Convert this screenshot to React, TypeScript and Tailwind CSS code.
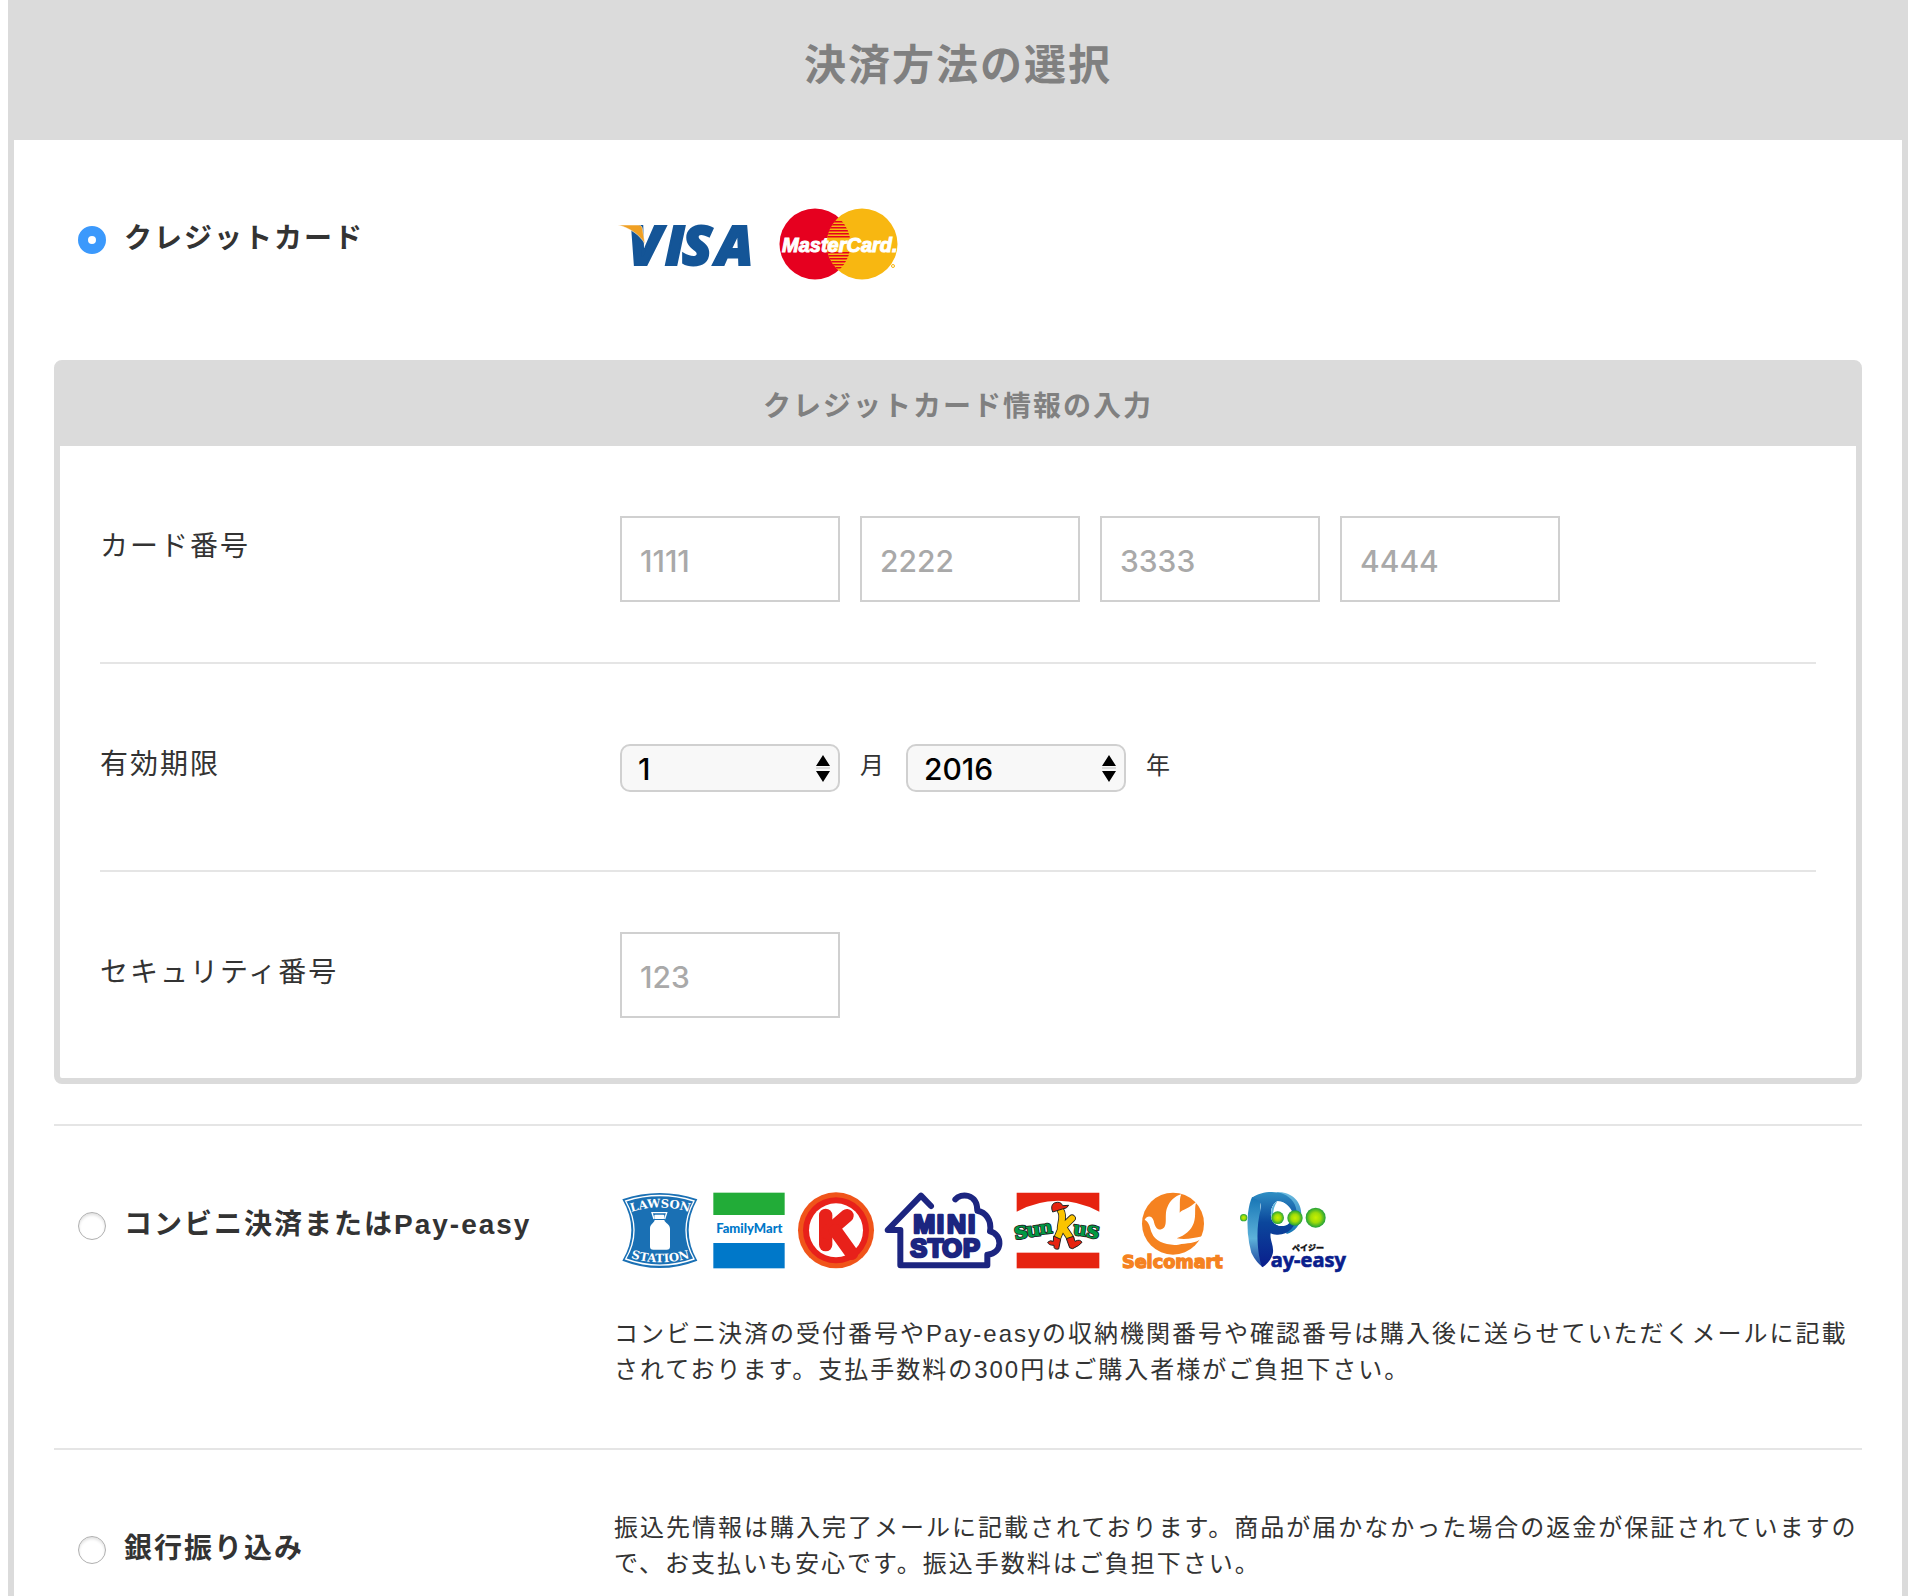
import { useState, type ReactNode } from "react";

const SANS = "font-['Liberation_Sans','Noto_Sans_CJK_JP',sans-serif]";

function VisaLogo() {
  return (
    <svg className="h-[80px] w-[136px] shrink-0" viewBox="0 -20 136 80" role="img" aria-label="VISA">
      <g fill="#145597" stroke="#145597" strokeWidth="2" fontFamily="'Open Sans', sans-serif" fontWeight="800" fontStyle="italic" fontSize="55">
        <text x="10 47 64 98" y="41">VISA</text>
      </g>
      <path d="M0 1h20c2.500 0 4 1 4.500 4l2.500 15C22 11 12 4 0 1z" fill="#f0a023" stroke="#fff" strokeWidth="0.500" />
    </svg>
  );
}

function MasterCardLogo() {
  return (
    <svg className="h-[72px] w-[120px] shrink-0" viewBox="0 0 120 72" role="img" aria-label="MasterCard">
      <defs>
        <clipPath id="mc-lens">
          <circle cx="83" cy="36" r="35.500" />
        </clipPath>
        <clipPath id="mc-left">
          <circle cx="36" cy="36" r="35.500" />
        </clipPath>
      </defs>
      <circle cx="36" cy="36" r="35.500" fill="#e6001f" />
      <circle cx="83" cy="36" r="35.500" fill="#f8b711" />
      <g clipPath="url(#mc-lens)">
        <g clipPath="url(#mc-left)">
          {[13, 16, 19, 22, 25, 28, 44, 47, 50, 53, 56, 59].map((y) => (
            <rect key={y} x="47" y={y} width="26" height="1.500" fill="#e6001f" />
          ))}
        </g>
      </g>
      <text x="3" y="44" fontFamily="'Liberation Sans', sans-serif" fontWeight="700" fontStyle="italic" fontSize="20" fill="#fff" stroke="#fff" strokeWidth="1">
        MasterCard.
      </text>
      <circle cx="114" cy="58" r="1.500" fill="none" stroke="#f8b711" />
    </svg>
  );
}

function LawsonLogo() {
  return (
    <svg className="h-[84px] w-[84px] shrink-0" viewBox="36 30 252 252" role="img" aria-label="LAWSON STATION">
      <defs>
        <path id="lawson-top" d="M62 97Q149 68 240 97" />
        <path id="lawson-bottom" d="M62 234Q149 260 240 234" />
      </defs>
      <path d="M37 58Q149 20 262 58Q236 105 236 150Q236 198 262 242Q149 286 37 242Q64 198 64 150Q64 105 37 58z" fill="#1a70b4" />
      <path d="M47 63Q149 30 252 63Q228 108 228 150Q228 195 252 237Q149 274 47 237Q72 195 72 150Q72 108 47 63z" fill="none" stroke="#fff" strokeWidth="4" />
      <g fontFamily="'DejaVu Serif', serif" fontWeight="700" fill="#fff" textAnchor="middle">
        <text fontSize="35">
          <textPath href="#lawson-top" startOffset="50%">LAWSON</textPath>
        </text>
        <text fontSize="35">
          <textPath href="#lawson-bottom" startOffset="50%">STATION</textPath>
        </text>
      </g>
      <path d="M132 117L126 98H170L164 117" fill="none" stroke="#fff" strokeWidth="4" />
      <rect x="133" y="104" width="30" height="13" rx="3" fill="#fff" />
      <path d="M134 120H163C165 130 180 132 180 146V200Q180 209 170 209H130Q120 209 120 200V146C120 132 132 130 134 120z" fill="#fff" />
    </svg>
  );
}

function FamilyMartLogo() {
  return (
    <svg className="h-[84px] w-[86px] shrink-0" viewBox="288 30 258 252" role="img" aria-label="FamilyMart">
      <rect x="310" y="38" width="214" height="67" fill="#22ac38" />
      <rect x="310" y="189" width="214" height="76" fill="#0078c9" />
      <text x="418" y="158" textAnchor="middle" fontFamily="Lato, sans-serif" fontWeight="900" fontSize="39" fill="#0078c9">
        FamilyMart
      </text>
    </svg>
  );
}

function CircleKLogo() {
  return (
    <svg className="h-[84px] w-[88px] shrink-0" viewBox="546 30 264 252" role="img" aria-label="サークルK">
      <circle cx="678" cy="151" r="114" fill="#f0541a" />
      <circle cx="678" cy="151" r="99" fill="#e8211a" />
      <circle cx="678" cy="151" r="81" fill="#fff" />
      <g stroke="#e8211a" strokeWidth="40" strokeLinecap="round">
        <line x1="647" y1="106" x2="647" y2="194" />
        <line x1="652" y1="158" x2="711" y2="107" />
        <line x1="676" y1="152" x2="725" y2="220" />
      </g>
    </svg>
  );
}

function MiniStopLogo() {
  return (
    <svg className="h-[84px] w-[130px] shrink-0" viewBox="30 30 390 252" role="img" aria-label="MINI STOP">
      <path
        d="M256 58C272 38 322 40 322 92C346 96 366 120 360 154C398 162 400 220 352 224V256H91V150H53L153 47L183 78"
        fill="none"
        stroke="#1c2580"
        strokeWidth="18"
        strokeLinecap="round"
        strokeLinejoin="round"
      />
      <g fill="#1c2580" stroke="#1c2580" strokeWidth="8" strokeLinejoin="round" fontFamily="'Liberation Sans', sans-serif" fontWeight="700">
        <text x="130 200 231 294" y="160" fontSize="79">MINI</text>
        <text x="121 173 217 279" y="231" fontSize="76">STOP</text>
      </g>
    </svg>
  );
}

function SunkusLogo() {
  return (
    <svg className="h-[84px] w-[100px] shrink-0" viewBox="420 30 300 252" role="img" aria-label="sunkus">
      <path d="M440 38H688V95Q564 30 440 95z" fill="#e62310" />
      <rect x="440" y="218" width="248" height="47" fill="#e62310" />
      <g fontFamily="'DejaVu Serif', serif" fontWeight="700" fill="#009944" stroke="#222" strokeWidth="5" paintOrder="stroke" strokeLinejoin="round">
        <text fontSize="72" transform="rotate(-9 440 178)" x="436" y="178">s</text>
        <text fontSize="60" transform="rotate(-7 475 172)" x="470" y="171">u</text>
        <text fontSize="56" transform="rotate(-7 515 164)" x="509" y="163">n</text>
        <text fontSize="58" transform="rotate(8 610 163)" x="607" y="164">u</text>
        <text fontSize="70" transform="rotate(10 650 170)" x="647" y="171">s</text>
      </g>
      <g fill="none" strokeLinecap="round" strokeLinejoin="round">
        <path d="M572 92C584 110 570 130 572 150L562 174M606 115L579 141L601 174" stroke="#222" strokeWidth="23" />
        <path d="M572 92C584 110 570 130 572 150L562 174M606 115L579 141L601 174" stroke="#fbc400" strokeWidth="18" />
      </g>
      <g fill="#e62310" stroke="#222" strokeWidth="3" strokeLinejoin="round">
        <path d="M548 96Q540 76 553 69Q572 62 578 77L596 76Q592 86 577 87z" />
        <path d="M551 168L572 178L566 207Q550 210 552 196Q536 196 533 187Q540 179 550 184z" />
        <path d="M589 176L610 169L615 184Q630 176 636 187Q630 196 608 206Q596 205 597 198z" />
      </g>
    </svg>
  );
}

function SeicomartLogo() {
  return (
    <svg className="h-[84px] w-[122px] shrink-0" viewBox="30 30 366 252" role="img" aria-label="Seicomart">
      <circle cx="219" cy="131" r="93" fill="#f58220" />
      <path
        d="M134 119C143 104 157 109 161 122C165 143 174 151 184 148C207 142 191 106 202 82C209 63 225 48 244 43C237 57 241 75 239 98C243 92 250 90 258 86C270 80 280 72 290 65C281 80 290 105 281 130C273 151 256 166 230 175C256 181 282 174 307 169L304 176C286 191 261 188 235 194C201 198 164 184 156 160C150 147 150 128 134 119z"
        fill="#fff"
      />
      <text x="217" y="263" textAnchor="middle" fontFamily="'DejaVu Sans', sans-serif" fontWeight="700" fontSize="53" fill="#f58220" stroke="#f58220" strokeWidth="4">
        Seicomart
      </text>
    </svg>
  );
}

function PayEasyLogo() {
  return (
    <svg className="h-[84px] w-[118px] shrink-0" viewBox="396 30 354 252" role="img" aria-label="Pay-easy ペイジー">
      <defs>
        <linearGradient id="pe-front" x1="0" y1="0" x2="0" y2="1">
          <stop offset="0" stopColor="#2f8fc4" />
          <stop offset="0.400" stopColor="#0b479c" />
          <stop offset="1" stopColor="#0a1e8c" />
        </linearGradient>
        <linearGradient id="pe-side" x1="0" y1="0" x2="0" y2="1">
          <stop offset="0" stopColor="#1473b4" />
          <stop offset="0.600" stopColor="#5db2da" />
          <stop offset="1" stopColor="#1a3f9c" />
        </linearGradient>
        <linearGradient id="pe-bowl" x1="0" y1="0" x2="0" y2="1">
          <stop offset="0" stopColor="#6cbbe0" />
          <stop offset="1" stopColor="#1473b4" />
        </linearGradient>
        <radialGradient id="pe-ball">
          <stop offset="0" stopColor="#c8f000" />
          <stop offset="0.500" stopColor="#9fdc0a" />
          <stop offset="1" stopColor="#1fa03c" />
        </radialGradient>
      </defs>
      <path d="M456 52L480 46L490 262Q470 250 454 218Q438 160 444 100Q448 68 456 52z" fill="url(#pe-side)" />
      <path d="M530 37C570 32 606 62 604 106C602 136 584 156 560 162L545 120L572 90z" fill="url(#pe-bowl)" />
      <path
        fillRule="evenodd"
        d="M456 54C480 34 525 32 550 42C578 54 592 78 590 106C588 142 564 166 530 164C522 164 516 162 512 160C508 180 524 200 518 222C512 242 500 254 486 262C472 220 466 150 482 88C486 74 480 58 456 54zM532 64C512 74 508 110 518 124C526 138 548 142 562 134C578 124 582 104 574 90C564 74 548 64 532 64z"
        fill="url(#pe-front)"
      />
      <path d="M532 64C512 74 508 108 518 124C526 138 548 142 562 134C578 124 582 104 574 90C564 74 548 64 532 64z" fill="#fff" />
      <path d="M532 64C510 76 508 110 524 131C516 108 518 84 532 64z" fill="#5fb4dc" />
      <g fill="url(#pe-ball)">
        <circle cx="431" cy="113" r="11" />
        <circle cx="533" cy="113" r="19" />
        <circle cx="585" cy="114" r="23" />
        <circle cx="647" cy="113" r="30" />
      </g>
      <text x="512" y="262" fontFamily="'Noto Sans', sans-serif" fontWeight="700" fontSize="60" fill="#0a1e8c" stroke="#0a1e8c" strokeWidth="2">
        ay-easy
      </text>
      <text x="576" y="212" fontFamily="'Noto Sans CJK JP', sans-serif" fontWeight="900" fontSize="24" fill="#111" stroke="#111">
        ペイジー
      </text>
    </svg>
  );
}

type MethodProps = {
  id: string;
  label: string;
  selected: string;
  onSelect: (id: string) => void;
  children: ReactNode;
};

function PaymentMethod({ id, label, selected, onSelect, children }: MethodProps) {
  return (
    <div className="grid grid-cols-[560px_1fr] items-start py-[60px]">
      <div className="flex items-center gap-[18px] pt-[18px] pl-6">
        <input
          type="radio"
          name="payment"
          id={id}
          checked={selected === id}
          onChange={() => onSelect(id)}
          className="mt-0.5 size-7 shrink-0 appearance-none rounded-full border border-[#b0b0b0] bg-white shadow-[inset_0_2px_3px_rgba(0,0,0,0.12)] checked:border-10 checked:border-[#3b99fc] checked:shadow-none"
        />
        <label htmlFor={id} className="text-[28px] leading-[42px] font-bold tracking-[2px] whitespace-nowrap">
          {label}
        </label>
      </div>
      <div>{children}</div>
    </div>
  );
}

function DigitsInput({ id, placeholder, label }: { id: string; placeholder: string; label?: string }) {
  return (
    <input
      type="text"
      id={id}
      aria-label={label}
      inputMode="numeric"
      placeholder={placeholder}
      className="h-[86px] w-[220px] border-2 border-[#d0d0d0] bg-white px-[18px] pt-1 font-['Inter',sans-serif] text-[30px] font-medium text-black placeholder:text-[#a9a9a9]"
    />
  );
}

function SelectBox({ id, label, options }: { id: string; label: string; options: string[] }) {
  return (
    <div className="relative w-[220px]">
      <select
        id={id}
        aria-label={label}
        className="block h-12 w-full appearance-none rounded-[10px] border-2 border-[#d0d0d0] bg-[#f8f8f8] pt-0.5 pl-4 font-['Inter',sans-serif] text-[30px] leading-[42px] font-medium tracking-normal text-black"
      >
        {options.map((o) => (
          <option key={o}>{o}</option>
        ))}
      </select>
      <svg className="pointer-events-none absolute top-[10px] right-[10px] h-7 w-[14px]" viewBox="0 0 14 28" aria-hidden="true">
        <path d="M7 1L14 12H0zM7 28L0 17H14z" fill="#000" />
        <rect y="13" width="14" height="2" fill="#dcdcdc" />
      </svg>
    </div>
  );
}

const rowLabel = "pt-5 text-[28px] leading-[42px] tracking-[2px]";
const noteText = "text-[24px] leading-9 tracking-[2px]";
const MONTHS = Array.from({ length: 12 }, (_, i) => String(i + 1));
const YEARS = Array.from({ length: 12 }, (_, i) => String(2016 + i));

export default function App() {
  const [method, setMethod] = useState("card");

  return (
    <div lang="ja" className={`min-h-screen bg-white pr-[10px] pl-2 text-[#333] ${SANS}`}>
      <main className="min-h-screen border-x-6 border-[#dbdbdb]">
        <h1 className="bg-[#dbdbdb] pt-[34px] pb-[42px] text-center text-[42px] leading-[64px] font-bold tracking-[2px] text-[#808080]">
          決済方法の選択
        </h1>
        <form className="px-10">
          <div className="h-[220px]">
            <PaymentMethod id="card" label="クレジットカード" selected={method} onSelect={setMethod}>
              <div className="flex items-center gap-[25px] pt-1 pl-1">
                <VisaLogo />
                <MasterCardLogo />
              </div>
            </PaymentMethod>
          </div>

          <section className="rounded-lg border-6 border-[#dbdbdb]">
            <h2 className="bg-[#dbdbdb] pt-5 pb-[18px] text-center text-[28px] leading-[42px] font-bold tracking-[2px] text-[#808080]">
              クレジットカード情報の入力
            </h2>
            <div className="px-10">
              <div className="grid grid-cols-[520px_1fr] items-start border-b-2 border-[#e5e5e5] py-[60px]">
                <label htmlFor="card1" className={rowLabel}>カード番号</label>
                <div className="flex gap-5 pt-[10px]">
                  <DigitsInput id="card1" placeholder="1111" />
                  <DigitsInput id="card2" placeholder="2222" label="カード番号 2" />
                  <DigitsInput id="card3" placeholder="3333" label="カード番号 3" />
                  <DigitsInput id="card4" placeholder="4444" label="カード番号 4" />
                </div>
              </div>
              <div className="grid grid-cols-[520px_1fr] items-start border-b-2 border-[#e5e5e5] py-[60px]">
                <label htmlFor="month" className={rowLabel}>有効期限</label>
                <div className="flex items-center gap-5 pt-5 pb-[18px] text-[24px] tracking-[2px]">
                  <SelectBox id="month" label="有効期限 月" options={MONTHS} />
                  <span className="-mt-1">月</span>
                  <SelectBox id="year" label="有効期限 年" options={YEARS} />
                  <span className="-mt-1">年</span>
                </div>
              </div>
              <div className="grid grid-cols-[520px_1fr] items-start py-[60px]">
                <label htmlFor="cvc" className={rowLabel}>セキュリティ番号</label>
                <div className="flex">
                  <DigitsInput id="cvc" placeholder="123" />
                </div>
              </div>
            </div>
          </section>

          <div className="mt-10 border-t-2 border-[#e5e5e5]">
            <PaymentMethod id="cvs" label="コンビニ決済またはPay-easy" selected={method} onSelect={setMethod}>
              <div className="mb-[42px] flex pt-1 pl-2">
                <LawsonLogo />
                <FamilyMartLogo />
                <CircleKLogo />
                <MiniStopLogo />
                <SunkusLogo />
                <SeicomartLogo />
                <PayEasyLogo />
              </div>
              <p className={noteText}>
                コンビニ決済の受付番号やPay-easyの収納機関番号や確認番号は購入後に送らせていただくメールに記載されております。支払手数料の300円はご購入者様がご負担下さい。
              </p>
            </PaymentMethod>
          </div>

          <div className="h-[146px] border-t-2 border-[#e5e5e5]">
            <PaymentMethod id="bank" label="銀行振り込み" selected={method} onSelect={setMethod}>
              <p className={noteText}>
                振込先情報は購入完了メールに記載されております。商品が届かなかった場合の返金が保証されていますので、お支払いも安心です。振込手数料はご負担下さい。
              </p>
            </PaymentMethod>
          </div>
        </form>
      </main>
    </div>
  );
}
